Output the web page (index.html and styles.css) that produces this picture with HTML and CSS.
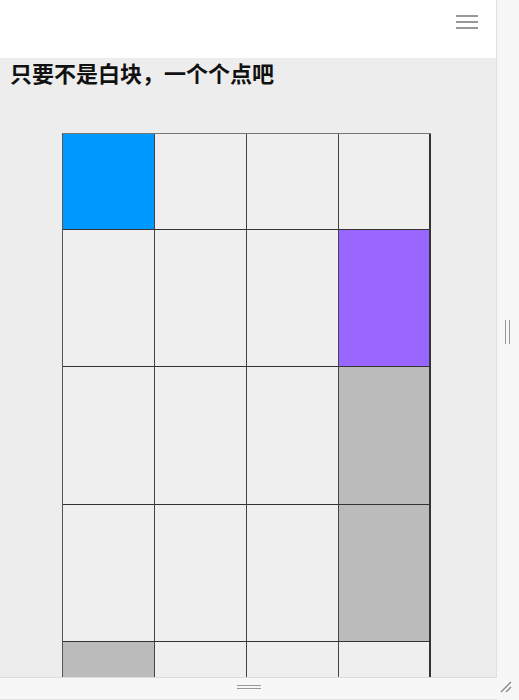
FILE: index.html
```html
<!DOCTYPE html>
<html lang="zh">
<head>
  <meta charset="UTF-8" />
  <meta name="viewport" content="width=device-width, initial-scale=1.0"/>
  <title>别踩白块</title>
  <link rel="stylesheet" href="styles.css">
</head>
<body>
<div class="shell">
  <div class="frame">
    <div class="topbar">
      <svg class="menu" width="22" height="14" viewBox="0 0 22 14">
        <path d="M0 1h22M0 7h22M0 13h22" stroke="#777" stroke-width="1.6"/>
      </svg>
    </div>
    <h1>只要不是白块，一个个点吧</h1>
    <div class="board">
      <div class="cell blue"></div><div class="cell"></div><div class="cell"></div><div class="cell"></div>
      <div class="cell"></div><div class="cell"></div><div class="cell"></div><div class="cell purple"></div>
      <div class="cell"></div><div class="cell"></div><div class="cell"></div><div class="cell grey"></div>
      <div class="cell"></div><div class="cell"></div><div class="cell"></div><div class="cell grey"></div>
      <div class="cell grey"></div><div class="cell"></div><div class="cell"></div><div class="cell"></div>
    </div>
  </div>
  <div class="side">
    <span class="vgrip"></span>
  </div>
  <div class="bottom">
    <span class="hgrip"></span>
  </div>
  <div class="corner">
    <svg width="12" height="12" viewBox="0 0 12 12">
      <path d="M1 11L11 1M6 11L11 6" stroke="#888" stroke-width="1.4"/>
    </svg>
  </div>
</div>
</body>
</html>
```
FILE: styles.css
```css
body {
  margin: 0;
  background: #f6f6f6;
  font-family: "Noto Sans CJK SC", "Noto Sans", sans-serif;
}
.shell {
  display: grid;
  grid-template-columns: 497px 22px;
  grid-template-rows: 678px 22px;
  width: 519px;
  height: 700px;
  overflow: hidden;
}
.frame {
  background: #ededed;
  border-right: 1px solid #e0e0e0;
  border-bottom: 1px solid #dcdcdc;
  overflow: hidden;
}
.topbar {
  height: 58px;
  background: #fff;
  display: flex;
  justify-content: flex-end;
  align-items: flex-start;
  padding: 15px 18px 0 0;
  box-sizing: border-box;
}
h1 {
  margin: 0;
  padding-left: 10px;
  font-size: 22px;
  line-height: 32px;
  font-weight: bold;
  color: #111;
  margin-top: -2px;
}
.board {
  margin: 45px 0 0 62px;
  width: max-content;
  display: grid;
  grid-template-columns: repeat(4, 92px);
  grid-template-rows: 96px 137px 138px 137px 137px;
  border-top: 1px solid #777;
  border-left: 1px solid #555;
}
.cell {
  background: #efefef;
  border-right: 1px solid #444;
  border-bottom: 1px solid #333;
}
.cell:nth-child(4n) {
  border-right: 2px solid #333;
}
.blue { background: #0099ff; }
.purple { background: #9966ff; }
.grey { background: #bbbbbb; }
.side {
  background: #f7f7f7;
  display: flex;
  align-items: center;
  justify-content: center;
}
.vgrip {
  width: 3px;
  height: 24px;
  border-left: 1px solid #999;
  border-right: 1px solid #999;
  margin-left: -1px;
  margin-top: -14px;
}
.bottom {
  background: #f7f7f7;
  border-bottom: 1px solid #e2e2e2;
  display: flex;
  justify-content: center;
  align-items: flex-start;
  padding-top: 7px;
  box-sizing: border-box;
}
.hgrip {
  width: 24px;
  height: 2px;
  border-top: 1px solid #999;
  border-bottom: 1px solid #999;
}
.corner {
  background: #f7f7f7;
  display: flex;
  align-items: flex-start;
  justify-content: flex-start;
  padding: 3px 0 0 3px;
  box-sizing: border-box;
}
```
